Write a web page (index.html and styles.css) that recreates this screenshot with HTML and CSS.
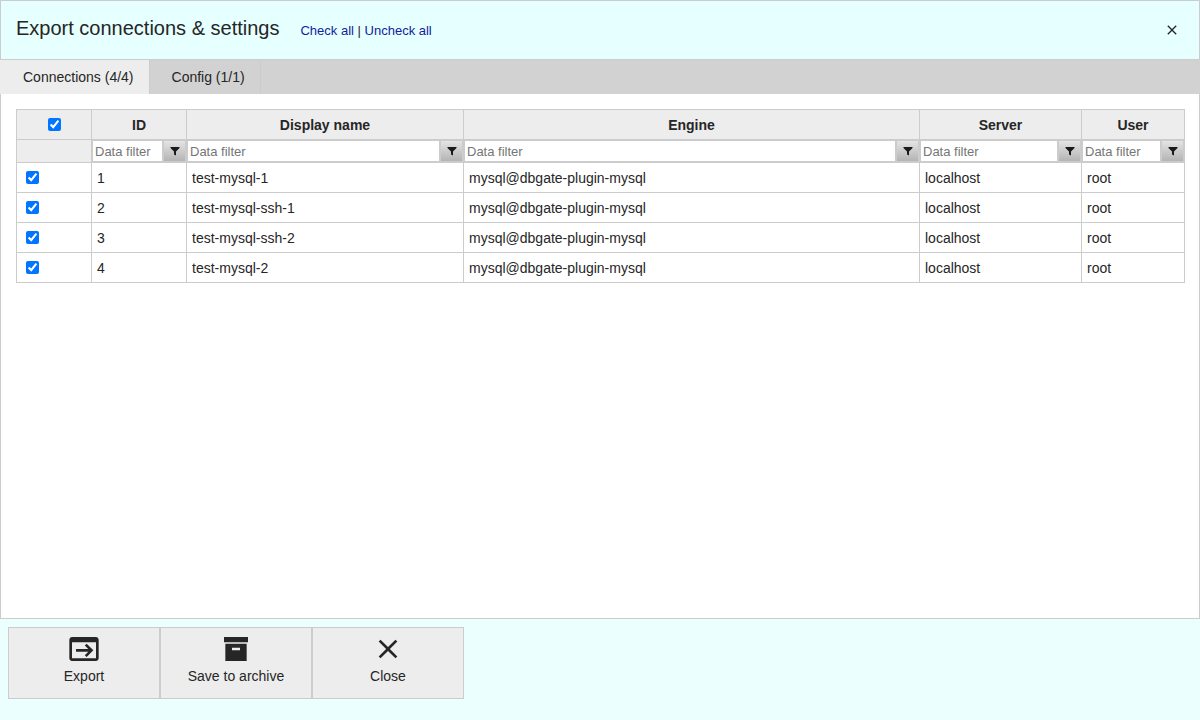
FILE: index.html
```html
<!DOCTYPE html>
<html lang="en">
    <head>
        <meta charset="utf-8">
        <title>Export connections &amp; settings</title>
        <link rel="stylesheet" href="styles.css">
    </head>
    <body>
        <div class="modal">
            <div class="head">
                <span class="title">Export connections &amp; settings</span>
                <span class="links"><a>Check all</a> | <a>Uncheck all</a></span>
                <span class="close-x">
                    <svg width="24" height="24" viewBox="0 0 24 24"><path d="M19 6.41 17.59 5 12 10.59 6.41 5 5 6.41 10.59 12 5 17.59 6.41 19 12 13.41 17.59 19 19 17.59 13.41 12z"/></svg>
                </span>
            </div>
            <div class="tabs">
                <div class="tab active">Connections (4/4)</div>
                <div class="tab">Config (1/1)</div>
            </div>
            <div class="content">
                <table class="grid">
                    <colgroup>
                        <col class="c0"><col class="c1"><col class="c2"><col class="c3"><col class="c4"><col class="c5">
                    </colgroup>
                    <thead>
                        <tr class="titles">
                            <th><input type="checkbox" checked></th>
                            <th>ID</th>
                            <th>Display name</th>
                            <th>Engine</th>
                            <th>Server</th>
                            <th>User</th>
                        </tr>
                        <tr class="filters">
                            <th></th>
                            <th><div class="filter"><input placeholder="Data filter"><button><svg viewBox="0 0 10 10"><path d="M0.5 1h9v1L6 5.6V9.5L4 8.5V5.6L0.5 2z"/></svg></button></div></th>
                            <th><div class="filter"><input placeholder="Data filter"><button><svg viewBox="0 0 10 10"><path d="M0.5 1h9v1L6 5.6V9.5L4 8.5V5.6L0.5 2z"/></svg></button></div></th>
                            <th><div class="filter"><input placeholder="Data filter"><button><svg viewBox="0 0 10 10"><path d="M0.5 1h9v1L6 5.6V9.5L4 8.5V5.6L0.5 2z"/></svg></button></div></th>
                            <th><div class="filter"><input placeholder="Data filter"><button><svg viewBox="0 0 10 10"><path d="M0.5 1h9v1L6 5.6V9.5L4 8.5V5.6L0.5 2z"/></svg></button></div></th>
                            <th><div class="filter"><input placeholder="Data filter"><button><svg viewBox="0 0 10 10"><path d="M0.5 1h9v1L6 5.6V9.5L4 8.5V5.6L0.5 2z"/></svg></button></div></th>
                        </tr>
                    </thead>
                    <tbody>
                        <tr>
                            <td class="chk"><input type="checkbox" checked></td>
                            <td>1</td><td>test-mysql-1</td><td>mysql@dbgate-plugin-mysql</td><td>localhost</td><td>root</td>
                        </tr>
                        <tr>
                            <td class="chk"><input type="checkbox" checked></td>
                            <td>2</td><td>test-mysql-ssh-1</td><td>mysql@dbgate-plugin-mysql</td><td>localhost</td><td>root</td>
                        </tr>
                        <tr>
                            <td class="chk"><input type="checkbox" checked></td>
                            <td>3</td><td>test-mysql-ssh-2</td><td>mysql@dbgate-plugin-mysql</td><td>localhost</td><td>root</td>
                        </tr>
                        <tr>
                            <td class="chk"><input type="checkbox" checked></td>
                            <td>4</td><td>test-mysql-2</td><td>mysql@dbgate-plugin-mysql</td><td>localhost</td><td>root</td>
                        </tr>
                    </tbody>
                </table>
            </div>
            <div class="foot">
                <div class="big-btn">
                    <svg width="32" height="32" viewBox="0 0 24 24"><path d="M21 3H3C2 3 1 4 1 5v14c0 1.100 1 2 2 2h18c1 0 2-.9 2-2V5c0-1-1-2-2-2zm0 16H3V7h18zM11 12H6v2h9.200l-2.600 2.600L14 18l5-5-5-5-1.400 1.400L15.200 12z"/></svg>
                    <span>Export</span>
                </div>
                <div class="big-btn">
                    <svg width="32" height="32" viewBox="0 0 24 24"><path d="M3 3h18v4H3zM4 8h16v13H4zm5 3v2h6v-2z" fill-rule="evenodd"/></svg>
                    <span>Save to archive</span>
                </div>
                <div class="big-btn">
                    <svg width="32" height="32" viewBox="0 0 24 24"><path d="M19 6.41 17.59 5 12 10.59 6.41 5 5 6.41 10.59 12 5 17.59 6.41 19 12 13.41 17.59 19 19 17.59 13.41 12z"/></svg>
                    <span>Close</span>
                </div>
            </div>
        </div>
    </body>
</html>
```

FILE: styles.css
```css
* {
    box-sizing: border-box;
}
html, body {
    height: 100%;
}
body {
    margin: 0;
    font-family: "Liberation Sans", Arial, sans-serif;
    font-size: 14px;
    color: #262626;
    background: #ebffff;
}

.modal {
    height: 720px;
    display: flex;
    flex-direction: column;
}

/* header */
.head {
    height: 60px;
    flex: none;
    display: flex;
    align-items: center;
    padding: 0 16px 4px 16px;
    background: #e6ffff;
    border: 1px solid #ccc;
    border-bottom-color: #ccc;
    padding-left: 15px;
}
.title {
    font-size: 20px;
}
.links {
    margin-left: 21px;
    margin-top: 4px;
    font-size: 13px;
}
.links a {
    color: #10239e;
}
.close-x {
    margin-left: auto;
    width: 24px;
    height: 24px;
    margin-right: -1px;
    margin-top: 4px;
}
.close-x svg {
    display: block;
    width: 16px;
    height: 16px;
    margin: 4px;
    fill: #262626;
}

/* tabs */
.tabs {
    height: 34px;
    flex: none;
    display: flex;
    background: #d2d2d2;
}
.tab {
    padding: 0 15px 0 22px;
    display: flex;
    align-items: center;
    border-right: 1px solid #ccc;
}
.tab.active {
    background: #ededed;
    padding-left: 23px;
}

/* table */
.content {
    flex: 1;
    background: #fff;
    border: 1px solid #ccc;
    border-top: 0;
    padding: 15px;
}
.grid {
    width: 1168px;
    table-layout: fixed;
    border-collapse: collapse;
}
.c0 { width: 75px; }
.c1 { width: 95px; }
.c2 { width: 277px; }
.c3 { width: 456px; }
.c4 { width: 162px; }
.c5 { width: 103px; }
.grid th, .grid td {
    border: 1px solid #ccc;
    padding: 0;
}
.grid th {
    background: #ededed;
}
.titles th {
    height: 30px;
}
.filters th {
    height: 23px;
}
.grid td {
    height: 30px;
    padding: 0 5px;
}
.grid td.chk {
    padding: 0 0 0 9px;
}
.grid input[type=checkbox] {
    display: block;
    width: 13px;
    height: 13px;
    margin: 0;
}
.titles input[type=checkbox] {
    margin: 0 auto;
}

/* filter input + button */
.filter {
    display: flex;
    height: 22px;
}
.filter input {
    flex: 1;
    min-width: 0;
    height: 22px;
    padding: 0 2px;
    border: 1px solid #ccc;
    border-top-width: 1px;
    font: 13px "Liberation Sans", Arial, sans-serif;
    background: #fff;
    outline: 0;
}
.filter input::placeholder {
    color: #757575;
}
.filter button {
    flex: none;
    width: 23px;
    height: 22px;
    padding: 0;
    border: 1px solid #ccc;
    background: linear-gradient(#e4e4e4, #b4b4b4);
    display: flex;
    align-items: center;
    justify-content: center;
}
.filter button svg {
    width: 10px;
    height: 10px;
    fill: #1a1a1a;
}

/* footer */
.foot {
    height: 101px;
    flex: none;
    display: flex;
    align-items: flex-start;
    padding: 8px 8px 0;
}
.big-btn {
    width: 152px;
    height: 72px;
    background: #ededed;
    border: 1px solid #ccc;
    display: flex;
    flex-direction: column;
    align-items: center;
    padding-top: 5px;
}
.big-btn svg {
    display: block;
    fill: #262626;
}
.big-btn span {
    margin-top: 3px;
}
```
